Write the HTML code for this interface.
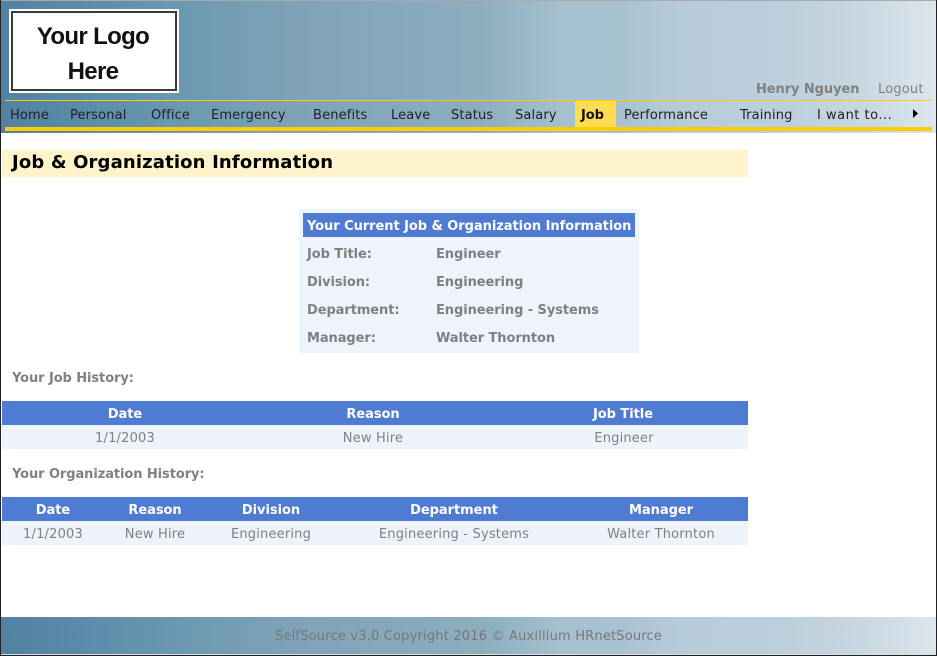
<!DOCTYPE html>
<html>
<head>
<meta charset="utf-8">
<style>
html,body{margin:0;padding:0;background:#fff}
body{width:937px;height:656px;position:relative;overflow:hidden;font-family:"DejaVu Sans",Verdana,sans-serif;font-size:13px;color:#808080;letter-spacing:.19px}
.a{position:absolute;white-space:nowrap}
.g{background:linear-gradient(90deg,#5282a3 0,#5a8ba8 80px,#6b99b1 180px,#80a3b8 300px,#8caebf 480px,#a5c0cf 560px,#a8c2d0 620px,#b7ccda 680px,#bccfdc 780px,#c8d7e1 860px,#dde6ee 937px)}
.n{top:108px;color:#222;line-height:15px;letter-spacing:.15px}
.c{text-align:center;transform:translateX(-50%)}
.b{font-weight:bold;letter-spacing:-.08px}
.w{color:#fff;font-weight:bold;letter-spacing:-.05px}
</style>
</head>
<body>
<div class="a g" style="left:1px;top:1px;width:935px;height:132px"></div>
<div class="a" style="left:0;top:0;width:937px;height:1px;background:#aaa"></div>

<div class="a" style="left:9px;top:9px;width:170px;height:84px;background:#fff"></div>
<div class="a" style="left:11px;top:11px;width:162px;height:76px;border:2px solid #3a3a3a;background:#fff"></div>
<div class="a c" style="left:93px;top:19px;font:bold 24px/35px 'Liberation Sans',sans-serif;letter-spacing:-.65px;color:#111;text-align:center">Your Logo<br>Here</div>

<div class="a b" style="left:756px;top:82px;line-height:15px">Henry Nguyen</div>
<div class="a" style="left:878px;top:82px;line-height:15px">Logout</div>

<div class="a" style="left:5px;top:100px;width:927px;height:1px;background:#fc0"></div>
<div class="a" style="left:5px;top:127px;width:927px;height:4px;background:#fc0"></div>
<div class="a" style="left:575px;top:101px;width:41px;height:26px;background:#ffdc50"></div>

<div class="a n" style="left:10px">Home</div>
<div class="a n" style="left:70px">Personal</div>
<div class="a n" style="left:151px">Office</div>
<div class="a n" style="left:211px">Emergency</div>
<div class="a n" style="left:313px">Benefits</div>
<div class="a n" style="left:391px">Leave</div>
<div class="a n" style="left:451px">Status</div>
<div class="a n" style="left:515px">Salary</div>
<div class="a n b" style="left:581px;color:#111">Job</div>
<div class="a n" style="left:624px">Performance</div>
<div class="a n" style="left:740px">Training</div>
<div class="a n" style="left:817px;letter-spacing:.5px">I want to...</div>
<svg class="a" style="left:912px;top:109px" width="7" height="10"><path d="M1 0L6 4.5L1 9Z" fill="#000"/></svg>

<div class="a" style="left:2px;top:150px;width:746px;height:27px;background:#fff3c9"></div>
<div class="a" style="left:12px;top:152px;font-size:18px;font-weight:bold;letter-spacing:.15px;line-height:22px;color:#000">Job &amp; Organization Information</div>

<div class="a" style="left:299px;top:209px;width:340px;height:144px;background:#eef3fc"></div>
<div class="a" style="left:303px;top:213px;width:332px;height:24px;background:#4f7bd3"></div>
<div class="a w" style="left:307px;top:219px;line-height:15px">Your Current Job &amp; Organization Information</div>
<div class="a b" style="left:307px;top:247px;line-height:15px">Job Title:</div>
<div class="a b" style="left:436px;top:247px;line-height:15px">Engineer</div>
<div class="a b" style="left:307px;top:275px;line-height:15px">Division:</div>
<div class="a b" style="left:436px;top:275px;line-height:15px">Engineering</div>
<div class="a b" style="left:307px;top:303px;line-height:15px">Department:</div>
<div class="a b" style="left:436px;top:303px;line-height:15px">Engineering - Systems</div>
<div class="a b" style="left:307px;top:331px;line-height:15px">Manager:</div>
<div class="a b" style="left:436px;top:331px;line-height:15px">Walter Thornton</div>

<div class="a b" style="left:12px;top:371px;line-height:15px">Your Job History:</div>
<div class="a" style="left:2px;top:401px;width:746px;height:24px;background:#4f7bd3"></div>
<div class="a" style="left:2px;top:425px;width:746px;height:24px;background:#eef3fb"></div>
<div class="a w c" style="left:125px;top:407px;line-height:15px">Date</div>
<div class="a w c" style="left:373px;top:407px;line-height:15px">Reason</div>
<div class="a w c" style="left:623px;top:407px;line-height:15px">Job Title</div>
<div class="a c" style="left:125px;top:431px;line-height:15px">1/1/2003</div>
<div class="a c" style="left:373px;top:431px;line-height:15px">New Hire</div>
<div class="a c" style="left:624px;top:431px;line-height:15px">Engineer</div>

<div class="a b" style="left:12px;top:467px;line-height:15px">Your Organization History:</div>
<div class="a" style="left:2px;top:497px;width:746px;height:24px;background:#4f7bd3"></div>
<div class="a" style="left:2px;top:521px;width:746px;height:24px;background:#eef3fb"></div>
<div class="a w c" style="left:53px;top:503px;line-height:15px">Date</div>
<div class="a w c" style="left:155px;top:503px;line-height:15px">Reason</div>
<div class="a w c" style="left:271px;top:503px;line-height:15px">Division</div>
<div class="a w c" style="left:454px;top:503px;line-height:15px">Department</div>
<div class="a w c" style="left:661px;top:503px;line-height:15px">Manager</div>
<div class="a c" style="left:53px;top:527px;line-height:15px">1/1/2003</div>
<div class="a c" style="left:155px;top:527px;line-height:15px">New Hire</div>
<div class="a c" style="left:271px;top:527px;line-height:15px">Engineering</div>
<div class="a c" style="left:454px;top:527px;line-height:15px">Engineering - Systems</div>
<div class="a c" style="left:661px;top:527px;line-height:15px">Walter Thornton</div>

<div class="a g" style="left:1px;top:617px;width:935px;height:37px"></div>
<div class="a" style="left:275px;top:629px;line-height:15px;color:#777">SelfSource v3.0 Copyright 2016 © Auxillium HRnetSource</div>
<div class="a" style="left:1px;top:654px;width:935px;height:1px;background:#ddd"></div>

<div class="a" style="left:0;top:0;width:1px;height:656px;background:#222"></div>
<div class="a" style="left:936px;top:0;width:1px;height:656px;background:#222"></div>
<div class="a" style="left:0;top:655px;width:937px;height:1px;background:#222"></div>
</body>
</html>
